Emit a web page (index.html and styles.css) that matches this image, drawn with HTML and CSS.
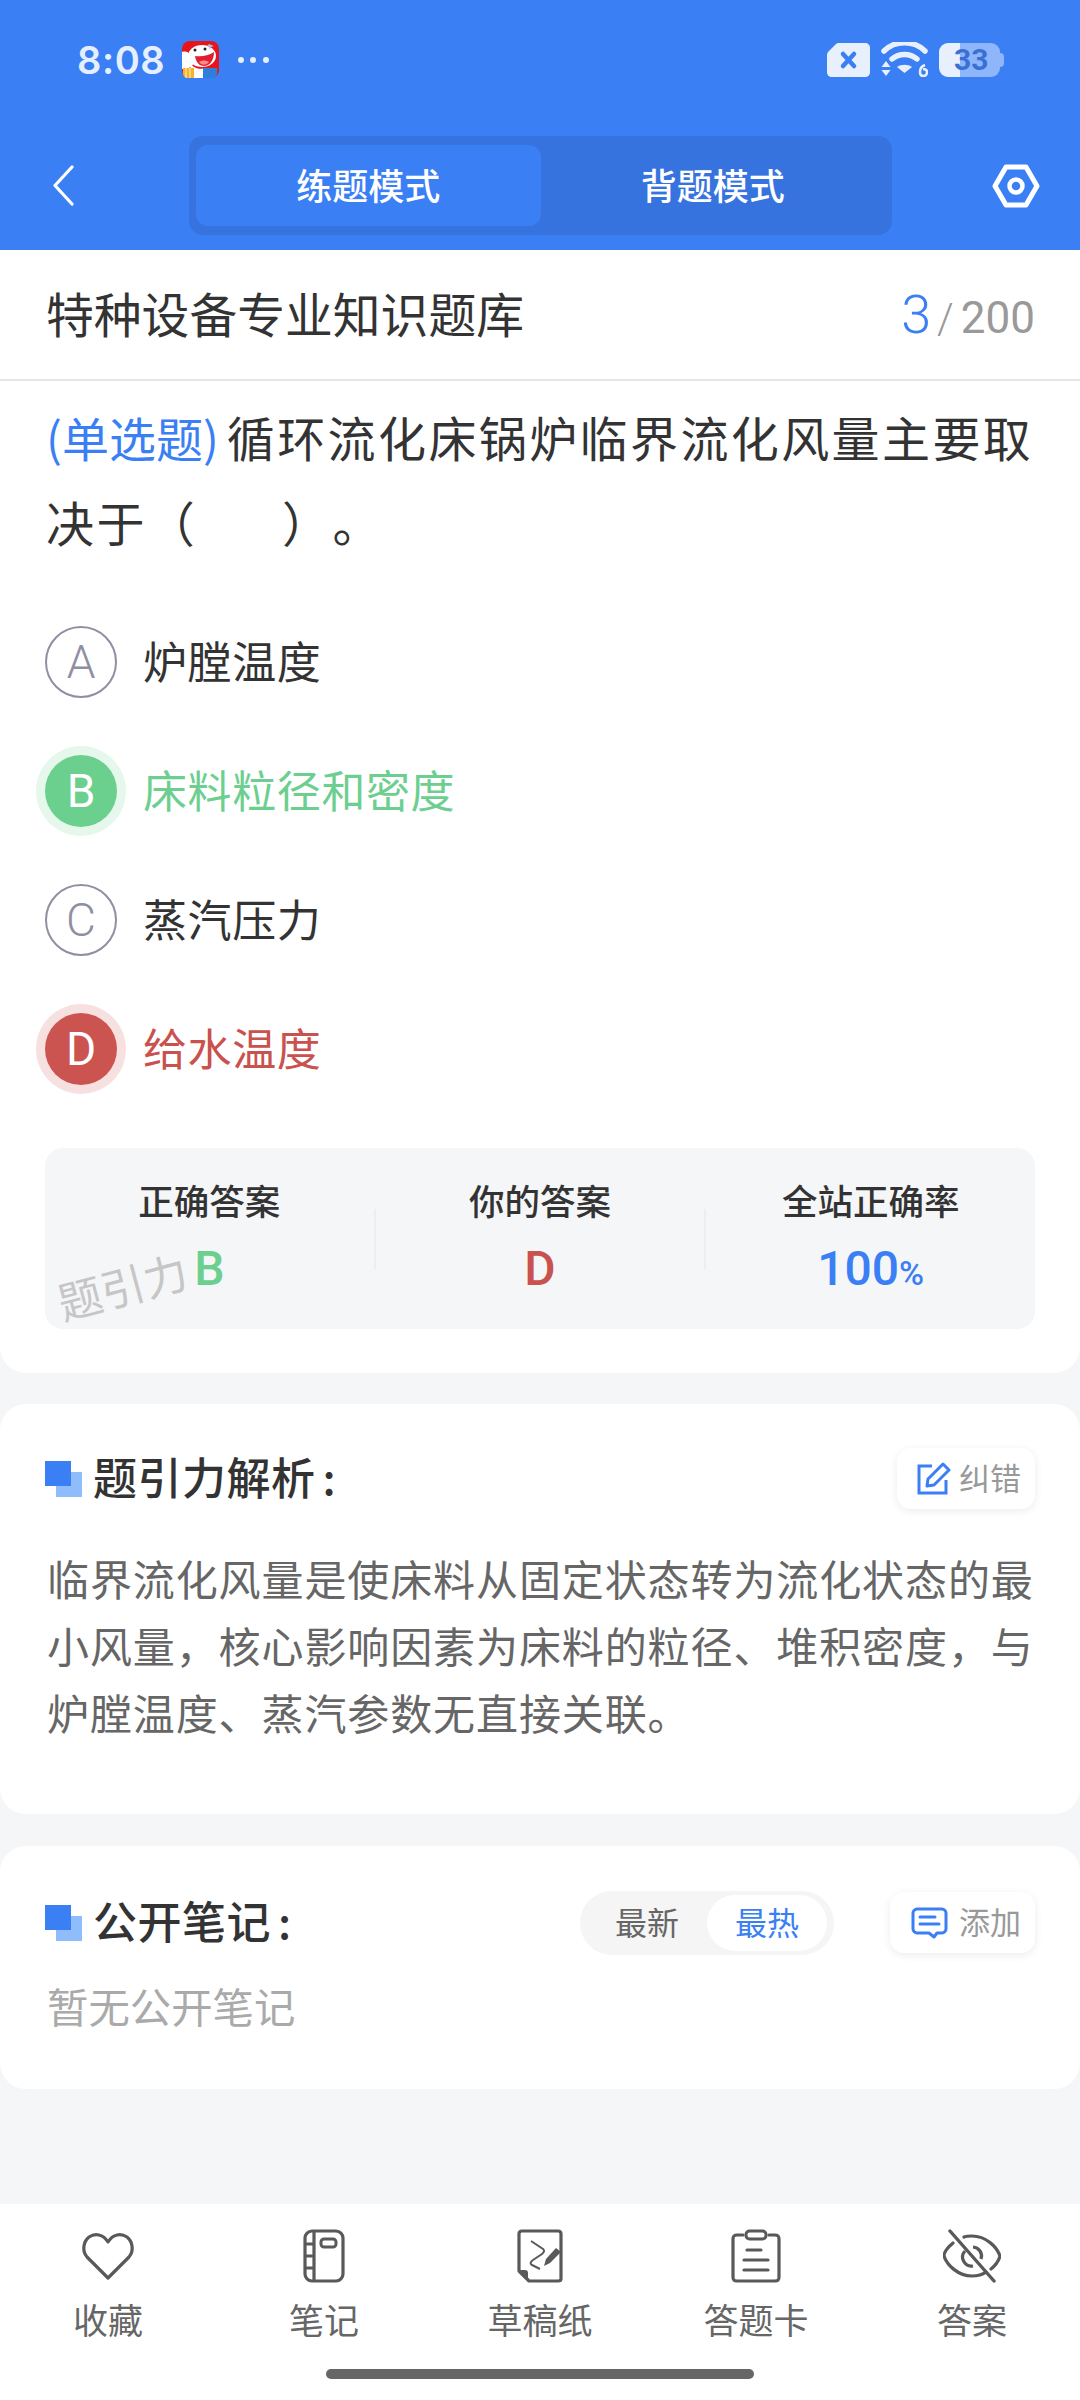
FILE: index.html
```html
<!DOCTYPE html>
<html lang="zh-CN">
<head>
    <meta charset="UTF-8">
    <meta name="viewport" content="width=device-width, initial-scale=1.0">
    <title>练题模式</title>
    <link rel="stylesheet" href="styles.css">
</head>
<body>
    <header class="top">
        <div class="status">
            <span class="time">8:08</span>
            <svg class="mascot" width="37" height="37" viewBox="0 0 37 37">
                <rect width="37" height="37" rx="8" fill="#e8141c"/>
                <path d="M0 11c4-1 6 0 8 2l3 11-4 3-7 1z" fill="#fff"/>
                <ellipse cx="20" cy="15" rx="14" ry="11" fill="#fff"/>
                <path d="M8 22c3 5 10 7 16 5l-2 4H9z" fill="#fff"/>
                <path d="M27 3l5 2-3 1-1 3-1-3-2-1z" fill="#a9bcdc"/>
                <path d="M13 15c6 1 13 0 19-4 0 8-4 14-10 14-5 0-8-4-9-10z" fill="#e0202c"/>
                <path d="M17 21c3-2 7-2 10 0-2 3-7 4-10 0z" fill="#ff8a8a"/>
                <circle cx="13" cy="9" r="1.500" fill="#222"/>
                <circle cx="23" cy="8" r="1.500" fill="#222"/>
                <path d="M1 27h11v10H6c-3 0-5-2-5-5z" fill="#f5b52a"/>
                <path d="M4 27v10M8 27v10" stroke="#fff3cf" stroke-width="1"/>
                <rect x="12" y="29" width="9" height="8" fill="#fff"/>
                <path d="M21 27h14v5c0 3-2 5-5 5h-9z" fill="#2f7fd8"/>
            </svg>
            <svg class="dots" width="31" height="8" viewBox="0 0 31 8">
                <circle cx="3" cy="4" r="3" fill="#e6efff"/>
                <circle cx="15" cy="4" r="3" fill="#e6efff"/>
                <circle cx="28" cy="4" r="3" fill="#e6efff"/>
            </svg>
            <div class="status-right">
                <svg width="43" height="34" viewBox="0 0 43 34">
                    <path d="M11 0h27c3 0 5 2 5 5v24c0 3-2 5-5 5H5c-3 0-5-2-5-5V12c0-2 1-3 2-4l6-6c1-1 2-2 3-2z" fill="#e8f0fe"/>
                    <path d="M16 11l11 12M27 11L16 23" stroke="#3b7ff5" stroke-width="4.500" stroke-linecap="round"/>
                </svg>
                <svg width="47" height="35" viewBox="0 0 47 35">
                    <path d="M3 9c11-11 30-11 41 0" fill="none" stroke="#e8f0fe" stroke-width="5.500" stroke-linecap="round"/>
                    <path d="M11 17c7-6 18-6 25 0" fill="none" stroke="#e8f0fe" stroke-width="5.500" stroke-linecap="round"/>
                    <path d="M16 25c4-3 11-3 15 0l-7.500 6z" fill="#e8f0fe"/>
                    <path d="M5 19l-4.500 6h9zM5 34l-4.500-6h9z" fill="#e8f0fe"/>
                    <path d="M44 23c-3 1-5 3-5 7 0 3 1 4 3 4s4-1 4-4-2-3-4-3" fill="none" stroke="#e8f0fe" stroke-width="2.500"/>
                </svg>
                <div class="battery"><span class="battery-num">33</span></div>
            </div>
        </div>
        <nav class="nav">
            <svg width="22" height="41" viewBox="0 0 22 41">
                <path d="M20 2L3 20.500 20 39" fill="none" stroke="#fff" stroke-width="3.200" stroke-linecap="round" stroke-linejoin="round"/>
            </svg>
            <div class="seg">
                <div class="seg-item seg-on">练题模式</div>
                <div class="seg-item">背题模式</div>
            </div>
            <svg class="gear" width="48" height="44" viewBox="0 0 48 44">
                <path d="M14 3h20l11 19-11 19H14L3 22z" fill="none" stroke="#fff" stroke-width="5" stroke-linejoin="round"/>
                <circle cx="24" cy="22" r="6.500" fill="none" stroke="#fff" stroke-width="4.500"/>
            </svg>
        </nav>
    </header>

    <main class="main">
        <section class="card card-q">
            <div class="bank">
                <h1 class="bank-name">特种设备专业知识题库</h1>
                <div class="count"><span class="count-now">3</span><span class="count-sep">/</span><span class="count-all">200</span></div>
            </div>
            <p class="question"><span class="q-type">(单选题)</span>循环流化床锅炉临界流化风量主要取<br>决于（&nbsp;&nbsp;&nbsp;&nbsp;&nbsp;&nbsp;）。</p>
            <ul class="options">
                <li class="option"><span class="letter">A</span><span class="opt-text">炉膛温度</span></li>
                <li class="option option-right"><span class="letter">B</span><span class="opt-text">床料粒径和密度</span></li>
                <li class="option"><span class="letter">C</span><span class="opt-text">蒸汽压力</span></li>
                <li class="option option-wrong"><span class="letter">D</span><span class="opt-text">给水温度</span></li>
            </ul>
            <div class="stats">
                <div class="stat">
                    <div class="stat-label">正确答案</div>
                    <div class="stat-val val-right">B</div>
                </div>
                <span class="stat-sep"></span>
                <div class="stat">
                    <div class="stat-label">你的答案</div>
                    <div class="stat-val val-wrong">D</div>
                </div>
                <span class="stat-sep"></span>
                <div class="stat">
                    <div class="stat-label">全站正确率</div>
                    <div class="stat-val val-rate">100<small>%</small></div>
                </div>
                <span class="watermark">题引力</span>
            </div>
        </section>

        <section class="card card-a">
            <div class="head">
                <span class="mark"></span>
                <h2 class="head-title">题引力解析<span class="colon">:</span></h2>
                <div class="tool tool-fix">
                    <svg width="34" height="33" viewBox="0 0 34 33">
                        <path d="M15 4H2v27h27V18" fill="none" stroke="#3b7ff5" stroke-width="3"/>
                        <path d="M10 24l1-7L26 2l6 6-15 15z" fill="none" stroke="#3b7ff5" stroke-width="3" stroke-linejoin="round"/>
                    </svg>
                    <span class="tool-text">纠错</span>
                </div>
            </div>
            <p class="analysis">临界流化风量是使床料从固定状态转为流化状态的最小风量，核心影响因素为床料的粒径、堆积密度，与炉膛温度、蒸汽参数无直接关联。</p>
        </section>

        <section class="card card-n">
            <div class="head">
                <span class="mark"></span>
                <h2 class="head-title">公开笔记<span class="colon">:</span></h2>
                <div class="sort">
                    <span class="sort-item">最新</span>
                    <span class="sort-item sort-on">最热</span>
                </div>
                <div class="tool tool-add">
                    <svg width="37" height="32" viewBox="0 0 37 32">
                        <path d="M6 2h25c2 0 4 2 4 4v16c0 2-2 4-4 4h-5l-3 4-5-4H6c-2 0-4-2-4-4V6c0-2 2-4 4-4z" fill="none" stroke="#3b7ff5" stroke-width="3" stroke-linejoin="round"/>
                        <path d="M9 10h15M9 17h19" stroke="#3b7ff5" stroke-width="3" stroke-linecap="round"/>
                    </svg>
                    <span class="tool-text">添加</span>
                </div>
            </div>
            <p class="empty">暂无公开笔记</p>
        </section>
    </main>

    <footer class="tabbar">
        <div class="tabs">
            <div class="tab">
                <svg width="54" height="54" viewBox="0 0 54 54">
                    <path d="M27 49L6 28C1 22 2 13 8 8c6-4 14-3 19 5 5-8 13-9 19-5 6 5 7 14 2 20z" fill="none" stroke="#595959" stroke-width="3.200" stroke-linejoin="round"/>
                </svg>
                <span>收藏</span>
            </div>
            <div class="tab">
                <svg width="54" height="54" viewBox="0 0 54 54">
                    <rect x="8" y="2" width="38" height="50" rx="7" fill="none" stroke="#595959" stroke-width="3.200"/>
                    <path d="M17 2v50M8 15h9M8 27h9M8 39h9" fill="none" stroke="#595959" stroke-width="3.200"/>
                    <rect x="24" y="10" width="15" height="8" rx="3" fill="none" stroke="#595959" stroke-width="3"/>
                </svg>
                <span>笔记</span>
            </div>
            <div class="tab">
                <svg width="54" height="54" viewBox="0 0 54 54">
                    <path d="M6 42V5c0-2 1-3 3-3h36c2 0 3 1 3 3v45c0 1-1 2-3 2H16z" fill="none" stroke="#595959" stroke-width="3.200" stroke-linejoin="round"/>
                    <path d="M6 41h6c2 0 3 1 3 3v7z" fill="#595959"/>
                    <path d="M18 12l12 8c2 2 1 3-1 5l-9 6c-3 2-3 4-1 5l8 4" fill="none" stroke="#595959" stroke-width="2"/>
                    <path d="M31 37l2-7 10-11 5 4-11 11z" fill="#595959"/>
                </svg>
                <span>草稿纸</span>
            </div>
            <div class="tab">
                <svg width="54" height="54" viewBox="0 0 54 54">
                    <path d="M14 6H8c-3 0-4 1-4 4v38c0 3 1 4 4 4h38c3 0 4-1 4-4V10c0-3-1-4-4-4h-6" fill="none" stroke="#595959" stroke-width="3.200" stroke-linecap="round"/>
                    <rect x="17" y="2" width="20" height="8" rx="3.500" fill="none" stroke="#595959" stroke-width="3"/>
                    <path d="M18 21h14M15 31h24M15 41h24" stroke="#595959" stroke-width="3.200" stroke-linecap="round"/>
                </svg>
                <span>答题卡</span>
            </div>
            <div class="tab">
                <svg width="58" height="54" viewBox="0 0 58 54">
                    <path d="M10 14C4 19 1 24 1 27c3 9 14 20 28 20 5 0 10-1 14-4M21 8c2-1 5-1 8-1 14 0 25 11 28 20-1 4-4 9-9 13" fill="none" stroke="#595959" stroke-width="3.200" stroke-linecap="round"/>
                    <path d="M22 22a9 9 0 0 0 8 15M30 18a9 9 0 0 1 8 12" fill="none" stroke="#595959" stroke-width="3.200"/>
                    <path d="M7 2l44 50" stroke="#595959" stroke-width="3.400" stroke-linecap="round"/>
                </svg>
                <span>答案</span>
            </div>
        </div>
        <div class="home-bar"></div>
    </footer>
</body>
</html>
```

FILE: styles.css
```css
* {
    box-sizing: border-box;
}
body {
    margin: 0;
    width: 1080px;
    height: 2400px;
    display: flex;
    flex-direction: column;
    font-family: "Noto Sans CJK SC", "Noto Sans", sans-serif;
    background-color: #f5f6f8;
    color: #333;
}
h1, h2, p, ul {
    margin: 0;
    padding: 0;
    font-weight: 400;
}

/* top blue area */
.top {
    height: 250px;
    padding-top: 41px;
    background-color: #3b7ff5;
}
.status {
    height: 37px;
    padding: 0 76px 0 77px;
    display: flex;
    align-items: center;
}
.time {
    width: 88px;
    font-family: Inter, sans-serif;
    font-size: 38px;
    font-weight: 600;
    letter-spacing: 0.6px;
    white-space: nowrap;
    color: #e6efff;
}
.mascot {
    margin-left: 17px;
}
.dots {
    margin-left: 19px;
}
.status-right {
    margin-left: auto;
    display: flex;
    align-items: center;
    gap: 11px;
}
.battery {
    position: relative;
    width: 61px;
    height: 34px;
    margin-right: 4px;
    border-radius: 9px;
    background: linear-gradient(90deg, #e8f0fe 21px, #8fb6fa 21px);
}
.battery::after {
    content: "";
    position: absolute;
    right: -4px;
    top: 10px;
    width: 4px;
    height: 14px;
    border-radius: 0 4px 4px 0;
    background-color: #8fb6fa;
}
.battery-num {
    position: absolute;
    left: 15px;
    top: 0;
    font-family: Roboto, sans-serif;
    font-size: 30px;
    font-weight: 700;
    line-height: 34px;
    color: #3a70d6;
}
.nav {
    height: 99px;
    margin-top: 58px;
    padding: 0 40px 0 52px;
    display: flex;
    align-items: center;
}
.seg {
    width: 703px;
    height: 99px;
    margin-left: 115px;
    padding: 9px 7px;
    display: flex;
    border-radius: 14px;
    background-color: #3673de;
}
.seg-item {
    flex: 1;
    padding-bottom: 3px;
    display: flex;
    align-items: center;
    justify-content: center;
    border-radius: 12px;
    font-size: 36px;
    font-weight: 500;
    color: #fff;
}
.seg-on {
    background-color: #3b7ff5;
}
.gear {
    margin-left: auto;
}

/* cards */
.main {
    flex: 1;
}
.card {
    background-color: #fff;
    border-radius: 26px;
}
.card-q {
    padding-bottom: 44px;
    border-radius: 0 0 26px 26px;
}
.card-a {
    margin-top: 31px;
    padding: 44px 45px 68.5px;
}
.card-n {
    margin-top: 32px;
    padding: 45px 45px 54px;
}
.bank {
    height: 131px;
    padding: 0 45px 0 46px;
    display: flex;
    align-items: center;
    justify-content: space-between;
    border-bottom: 2px solid #e6e6e6;
}
.bank-name {
    margin-bottom: 3px;
    font-size: 47.8px;
    line-height: 60px;
    color: #333;
}
.count {
    display: flex;
    align-items: baseline;
    font-family: Roboto, sans-serif;
    color: #999;
}
.count-now {
    font-size: 54px;
    font-weight: 300;
    color: #3b7ff5;
}
.count-sep {
    margin: 0 7px 0 6px;
    font-size: 42px;
    font-weight: 300;
}
.count-all {
    font-size: 44px;
}
.question {
    padding: 13px 40px 0 46px;
    font-size: 48px;
    line-height: 85px;
    letter-spacing: 2.4px;
    word-spacing: 1px;
    text-spacing-trim: space-all;
}
.q-type {
    margin-right: 8px;
    font-size: 47px;
    letter-spacing: 0;
    color: #3b7ff5;
}

/* options */
.options {
    margin-top: 62px;
    padding: 0 45px;
    display: flex;
    flex-direction: column;
    gap: 57px;
    list-style: none;
}
.option {
    height: 72px;
    display: flex;
    align-items: center;
    gap: 26px;
    font-size: 44px;
    letter-spacing: 0.6px;
}
.opt-text {
    margin-bottom: 5px;
}
.letter {
    width: 72px;
    height: 72px;
    display: flex;
    align-items: center;
    justify-content: center;
    border: 2px solid #8f8fa3;
    border-radius: 50%;
    font-family: Roboto, sans-serif;
    font-size: 46px;
    font-weight: 300;
    letter-spacing: 0;
    color: #8f8fa3;
}
.option-right {
    color: #6dcf8f;
}
.option-right .letter {
    border: none;
    background-color: #6bd08e;
    box-shadow: 0 0 0 9px #e6f7ec;
    font-weight: 400;
    color: #fff;
}
.option-wrong {
    color: #c9514e;
}
.option-wrong .letter {
    border: none;
    background-color: #cc5450;
    box-shadow: 0 0 0 9px #f7e1e0;
    font-weight: 400;
    color: #fff;
}

/* answer summary */
.stats {
    position: relative;
    height: 181px;
    margin: 63px 45px 0;
    display: flex;
    align-items: center;
    border-radius: 18px;
    background-color: #f5f6f8;
}
.stat {
    flex: 1;
    padding-bottom: 4px;
    text-align: center;
}
.stat-label {
    font-size: 35.5px;
    font-weight: 500;
    line-height: 50px;
}
.stat-val {
    margin-top: 14px;
    font-family: Roboto, sans-serif;
    font-size: 48px;
    font-weight: 500;
    line-height: 60px;
}
.stat-val small {
    font-size: 34px;
    line-height: 1;
}
.stat-sep {
    width: 2px;
    height: 60px;
    background-color: #eceef0;
}
.val-right {
    color: #6dcf8f;
}
.val-wrong {
    color: #c9514e;
}
.val-rate {
    color: #3b7ff5;
}
.watermark {
    position: absolute;
    left: 11px;
    top: 112px;
    font-size: 44px;
    line-height: 50px;
    color: #c6c6c6;
    transform: rotate(-15deg);
}

/* section heads */
.head {
    display: flex;
    align-items: center;
}
.mark {
    position: relative;
    width: 37px;
    height: 36px;
    margin-right: 11px;
    background: linear-gradient(#8fbcfb, #8fbcfb) 11px 11px / 26px 25px no-repeat;
}
.mark::before {
    content: "";
    position: absolute;
    left: 0;
    top: 0;
    width: 26px;
    height: 25px;
    background-color: #3b7ff5;
}
.head-title {
    margin-bottom: 5px;
    font-size: 44px;
    font-weight: 500;
    line-height: 52px;
    letter-spacing: 0.5px;
}
.colon {
    margin-left: 7px;
}
.tool {
    height: 61px;
    margin-left: auto;
    display: flex;
    align-items: center;
    justify-content: flex-end;
    gap: 8px;
    padding-right: 14px;
    border-radius: 14px;
    background-color: #fff;
    box-shadow: 0 2px 8px rgba(0, 0, 0, 0.08);
    font-size: 31px;
    color: #999;
}
.tool-text {
    margin-bottom: 4px;
}
.tool-fix {
    width: 138px;
}
.tool-add {
    width: 145px;
    margin-left: 57px;
    gap: 11px;
}
.analysis {
    margin-top: 35px;
    padding-left: 2px;
    font-size: 42px;
    line-height: 67px;
    letter-spacing: 0.9px;
    color: #666;
}
.sort {
    height: 64px;
    margin-left: auto;
    padding: 4px 7px;
    display: flex;
    border-radius: 32px;
    background-color: #f5f5f5;
}
.sort-item {
    width: 120px;
    padding-bottom: 4px;
    display: flex;
    align-items: center;
    justify-content: center;
    border-radius: 28px;
    font-size: 32px;
    color: #666;
}
.sort-on {
    background-color: #fff;
    color: #3b7ff5;
}
.card-n .tool-add {
    margin-left: 56px;
}
.empty {
    margin-top: 20px;
    padding-left: 2px;
    font-size: 41.4px;
    line-height: 60px;
    color: #aaa;
}

/* bottom bar */
.tabbar {
    height: 196px;
    background-color: #fff;
}
.tabs {
    padding-top: 25px;
    display: flex;
}
.tab {
    flex: 1;
    display: flex;
    flex-direction: column;
    align-items: center;
    font-size: 35px;
    line-height: 46px;
    color: #666;
}
.tab svg {
    display: block;
    margin-bottom: 13px;
}
.home-bar {
    width: 428px;
    height: 10px;
    margin: 27px auto 0;
    border-radius: 5px;
    background-color: #666;
}
```
